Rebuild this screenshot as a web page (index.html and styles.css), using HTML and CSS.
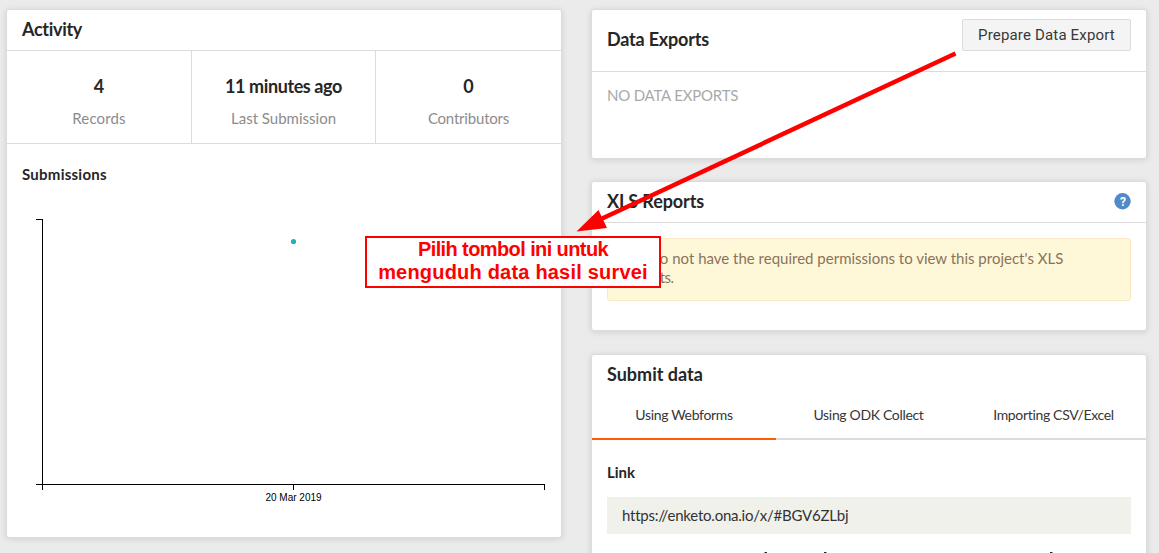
FILE: index.html
```html
<!DOCTYPE html>
<html lang="en">
<head>
<meta charset="utf-8">
<title>Project overview</title>
<link rel="stylesheet" href="styles.css">
</head>
<body>
<main class="page">
  <section class="card activity">
    <header class="card-head"><h2 class="t-activity">Activity</h2></header>
    <div class="stats">
      <div class="stat"><strong>4</strong><span class="t-records">Records</span></div>
      <div class="stat"><strong class="t-ago">11 minutes ago</strong><span class="t-last">Last Submission</span></div>
      <div class="stat"><strong>0</strong><span class="t-contrib">Contributors</span></div>
    </div>
    <h3 class="chart-title"><span class="t-subs">Submissions</span></h3>
    <svg class="chart" width="554" height="320" viewBox="7 200 554 320">
      <g fill="none" stroke="#000" shape-rendering="crispEdges">
        <path d="M36 219.500H42.500V484.500H36"/>
        <path d="M42.500 490V484.500H544.500V490"/>
        <path d="M293.500 484V490"/>
      </g>
      <circle cx="293.500" cy="241.500" r="2.600" fill="#1fb1b3"/>
      <text class="tick" x="293.500" y="501" text-anchor="middle">20 Mar 2019</text>
    </svg>
  </section>

  <div class="column">
    <section class="card exports">
      <header class="card-head card-head-tall">
        <h2 class="t-exports">Data Exports</h2>
        <button class="button"><span class="t-prepare">Prepare Data Export</span></button>
      </header>
      <p class="empty"><span class="t-empty">NO DATA EXPORTS</span></p>
    </section>

    <section class="card reports">
      <header class="card-head">
        <h2 class="t-reports">XLS Reports</h2>
        <svg class="help" width="17" height="17" viewBox="0 0 17 17">
          <circle cx="8.500" cy="8.200" r="8.200" fill="#528ac9"/>
          <text class="help-mark" x="8.900" y="12.500" text-anchor="middle">?</text>
        </svg>
      </header>
      <p class="alert"><span class="t-alert">You do not have the required permissions to view this project's XLS</span><br><span class="t-alert2">Reports.</span></p>
    </section>

    <section class="card submit">
      <header class="submit-head"><h2 class="t-submit">Submit data</h2></header>
      <nav class="tabs">
        <a class="tab tab-active"><span class="t-web">Using Webforms</span></a>
        <a class="tab"><span class="t-odk">Using ODK Collect</span></a>
        <a class="tab"><span class="t-csv">Importing CSV/Excel</span></a>
      </nav>
      <h3 class="link-title"><span class="t-link">Link</span></h3>
      <div class="url"><span class="t-url">https://enketo.ona.io/x/#BGV6ZLbj</span></div>
      <svg class="next-row" width="554" height="1" viewBox="592 0 554 1">
        <path d="M764.500 .5h2.500M824 .5h2.500M1050 .5h2.500" stroke="#262626"/>
      </svg>
    </section>
  </div>
</main>
<svg class="arrow" width="1159" height="553" viewBox="0 0 1159 553">
  <path d="M955.500 53.500L600 219.500" stroke="#f00" stroke-width="4.500"/>
  <path d="M576.500 231.500L598.500 210L607 228Z" fill="#f00"/>
</svg>
<div class="callout"><span class="t-call1">Pilih tombol ini untuk</span><span class="t-call2">menguduh data hasil survei</span></div>
</body>
</html>
```

FILE: styles.css
```css
* { box-sizing: border-box; }
body {
  margin: 0;
  height: 553px;
  overflow: hidden;
  position: relative;
  background: #ebebeb;
  color: #262626;
  font: 15px/20px Lato, "Open Sans", sans-serif;
  font-variant-ligatures: none;
}
h2, h3, p { margin: 0; }
h2 { font-size: 18px; line-height: 24px; font-weight: 700; }
h3 { font-size: 15px; line-height: 20px; font-weight: 700; }
.page {
  display: grid;
  grid-template-columns: 556px 556px;
  column-gap: 29px;
  align-items: start;
  height: 553px;
  overflow: hidden;
  padding: 9px 0 0 6px;
}
.column { display: grid; row-gap: 22px; }
.card {
  background: #fff;
  border: 1px solid #dcdcdc;
  border-radius: 3px;
  box-shadow: 0 1px 6px rgba(0, 0, 0, .12);
}
.card-head {
  display: flex;
  align-items: center;
  justify-content: space-between;
  height: 41px;
  padding: 0 15px 2px;
  border-bottom: 1px solid #dcdcdc;
}
.activity { height: 529px; }
.stats {
  display: grid;
  grid-template-columns: 185px 184px 185px;
  height: 93px;
  border-bottom: 1px solid #dcdcdc;
}
.stat {
  display: flex;
  flex-direction: column;
  align-items: center;
  padding-top: 23px;
  border-right: 1px solid #dcdcdc;
}
.stat:last-child { border-right: 0; }
.stat strong { font-size: 18px; line-height: 24px; }
.stat span { margin-top: 10px; color: #8c8c8c; }
.chart-title { padding: 20px 15px 0; height: 56px; }
.chart { display: block; }
.tick { font: 10px "Liberation Sans", Arial, sans-serif; fill: #000; }
.exports { height: 150px; }
.card-head-tall { height: 62px; align-items: flex-start; padding-top: 9px; }
.card-head-tall h2 { padding-top: 8px; }
.button {
  width: 169px;
  height: 32px;
  padding: 0;
  border: 1px solid #dcdcdc;
  border-radius: 2px;
  background: #f4f4f4;
  color: #383838;
  font: 15px/30px Roboto, sans-serif;
}
.empty { padding: 13px 15px; color: #a9a9a9; }
.reports { height: 150px; }
.help { display: block; }
.help-mark { font: bold 12px Roboto, sans-serif; fill: #fff; }
.alert {
  height: 63px;
  margin: 15px;
  padding: 10px 15px;
  border: 1px solid #fbe7c3;
  border-radius: 3px;
  background: #fff8d8;
  color: #8a735b;
  line-height: 19px;
  white-space: nowrap;
}
.submit { height: 260px; margin-top: 1px; }
.submit-head { padding: 7px 15px 0; }
.tabs { display: grid; grid-template-columns: 184px 185px 185px; height: 54px; }
.tab {
  display: flex;
  justify-content: center;
  padding-top: 19px;
  border-bottom: 2px solid #dcdcdc;
  color: #363636;
  font-size: 14px;
}
.tab-active { border-color: #ff5c00; }
.link-title { padding: 22px 15px 0; }
.url {
  height: 37px;
  margin: 15px 15px 0;
  padding: 8px 15px;
  background: #f0f1eb;
  color: #333;
}
.next-row { display: block; margin-top: 18px; }
.arrow { position: absolute; left: 0; top: 0; }
.callout {
  position: absolute;
  left: 365px;
  top: 236px;
  width: 296px;
  height: 52px;
  display: flex;
  flex-direction: column;
  align-items: center;
  border: 2px solid #f00;
  background: #fff;
  color: #f00;
  font: bold 20px/23px "Liberation Sans", Arial, sans-serif;
  white-space: nowrap;
}

/* Tracking per label */
.t-activity { letter-spacing: -.3px; }
.t-ago { letter-spacing: -.4px; }
.t-records { letter-spacing: .15px; }
.t-contrib { letter-spacing: -.2px; }
.t-subs { letter-spacing: .25px; }
.t-exports { letter-spacing: -.2px; }
.t-reports { letter-spacing: -.1px; }
.t-prepare { letter-spacing: .17px; }
.t-empty { letter-spacing: -.2px; }
.t-alert2 { letter-spacing: -.5px; }
.t-web, .t-odk, .t-csv { letter-spacing: -.33px; }
.t-url { letter-spacing: -.22px; }
.t-call1 { letter-spacing: -.6px; }
.t-call2 { letter-spacing: .2px; }
```
